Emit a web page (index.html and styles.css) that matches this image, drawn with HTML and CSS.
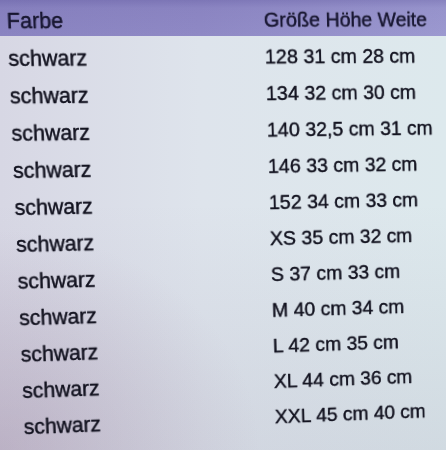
FILE: index.html
```html
<!DOCTYPE html>
<html lang="de">
<head>
<meta charset="utf-8">
<title>Größentabelle</title>
<link rel="stylesheet" href="styles.css">
</head>
<body>
<div class="sheet">
  <div class="row head"><span class="c1">Farbe</span><span class="c2">Größe Höhe Weite</span></div>
  <div class="row"><span class="c1">schwarz</span><span class="c2">128 31 cm 28 cm</span></div>
  <div class="row"><span class="c1">schwarz</span><span class="c2">134 32 cm 30 cm</span></div>
  <div class="row"><span class="c1">schwarz</span><span class="c2">140 32,5 cm 31 cm</span></div>
  <div class="row"><span class="c1">schwarz</span><span class="c2">146 33 cm 32 cm</span></div>
  <div class="row"><span class="c1">schwarz</span><span class="c2">152 34 cm 33 cm</span></div>
  <div class="row"><span class="c1">schwarz</span><span class="c2">XS 35 cm 32 cm</span></div>
  <div class="row"><span class="c1">schwarz</span><span class="c2">S 37 cm 33 cm</span></div>
  <div class="row"><span class="c1">schwarz</span><span class="c2">M 40 cm 34 cm</span></div>
  <div class="row"><span class="c1">schwarz</span><span class="c2">L 42 cm 35 cm</span></div>
  <div class="row"><span class="c1">schwarz</span><span class="c2">XL 44 cm 36 cm</span></div>
  <div class="row"><span class="c1">schwarz</span><span class="c2">XXL 45 cm 40 cm</span></div>
</div>
</body>
</html>
```

FILE: styles.css
```css
html, body {
  margin: 0;
  padding: 0;
  width: 446px;
  height: 450px;
  overflow: hidden;
}

body {
  background-color: #dce2ea;
  background-image:
    linear-gradient(to bottom, rgba(60, 50, 130, 0.22) 0, rgba(60, 50, 130, 0.06) 8px, rgba(60, 50, 130, 0) 36px),
    linear-gradient(to right, #8a84c1 0, #8f89c5 45%, #9c99d0 100%),
    radial-gradient(ellipse 260px 220px at 0 450px, rgba(150, 120, 150, 0.3), rgba(150, 120, 150, 0)),
    linear-gradient(to bottom, rgba(120, 110, 140, 0) 45%, rgba(120, 110, 140, 0.12) 100%),
    linear-gradient(to right, #d7d7e4 0, #dee4ec 45%, #dde9ed 100%);
  background-size:
    100% 36px,
    100% 36px,
    100% 100%,
    100% 100%,
    100% 100%;
  background-repeat: no-repeat;
}

.sheet {
  transform-origin: 0 0;
  transform: matrix3d(1.024938, 0.000187, 0, 0.00009446,
                      0.043115, 1.02186, 0, 0.00005612,
                      0, 0, 1, 0,
                      -1.33868, -0.29151, 0, 0.997824);
  padding: 1.5px 0 0 7px;
  font-family: "Liberation Sans", Arial, sans-serif;
  color: #12121f;
  -webkit-text-stroke: 0.3px #12121f;
  text-shadow: 0 0 0.6px rgba(18, 18, 31, 0.6);
}

.row {
  display: grid;
  grid-template-columns: 257px auto;
  height: 37px;
  line-height: 37px;
  white-space: nowrap;
}

.c1 {
  font-size: 21.2px;
}

.c2 {
  font-size: 20.4px;
}

.head {
  color: #181636;
}
```
